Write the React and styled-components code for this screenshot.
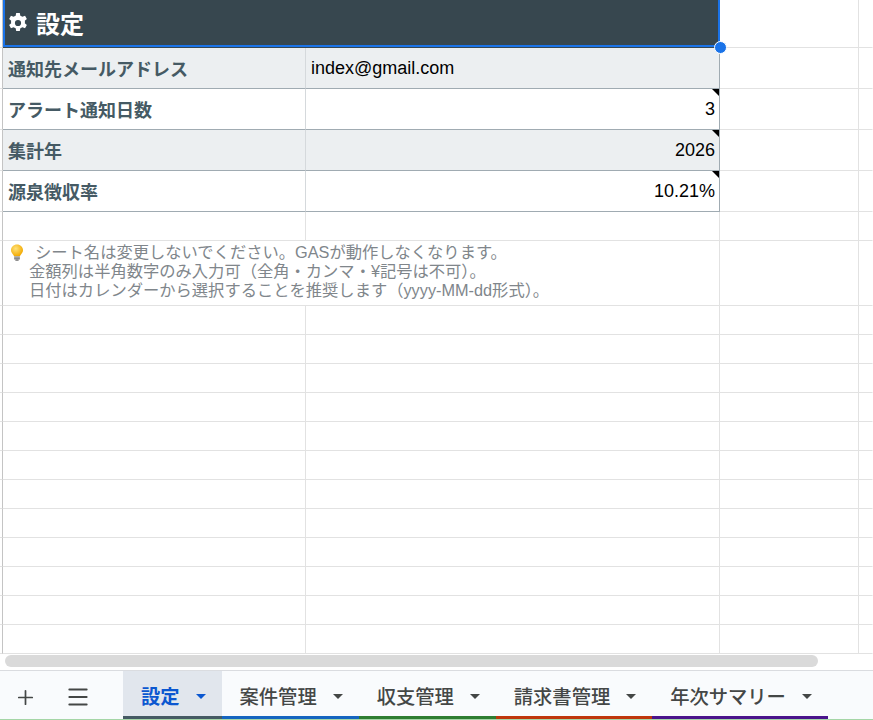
import React from 'react';
import styled, { createGlobalStyle } from 'styled-components';
import { Plus, Menu } from 'lucide-react';

const GlobalStyle = createGlobalStyle`
  html, body {
    margin: 0;
    padding: 0;
    background: #fff;
  }
  * {
    box-sizing: border-box;
  }
`;

const FONT = `"Liberation Sans", "Noto Sans CJK JP", Arial, sans-serif`;

const Page = styled.div`
  width: 873px;
  height: 720px;
  overflow: hidden;
  display: flex;
  flex-direction: column;
  font-family: ${FONT};
  background: #fff;
`;

// header, 4 table rows, spacer, note row, then the plain rows
const Grid = styled.div`
  display: grid;
  grid-template-columns: 3px 303px 414px 139px 1fr;
  grid-template-rows: 48px repeat(4, 41px) 29px 65px repeat(12, 29px);
`;

const Cell = styled.div`
  position: relative;
  display: flex;
  align-items: center;
  min-width: 0;
  background: ${(p) => p.$bg || '#fff'};
  border-bottom: 1px solid ${(p) => p.$line || '#e2e2e2'};
  border-right: 1px solid ${(p) => p.$vline || '#e2e2e2'};
  justify-content: ${(p) => (p.$right ? 'flex-end' : 'flex-start')};
`;

const Stub = styled(Cell)`
  border-right: 1px solid #c4c4c4;
`;

const HeaderCell = styled(Cell)`
  grid-column: 2 / 4;
  background: #37474f;
  border-bottom: 1px solid #37474f;
  border-right: none;
  box-shadow: inset 0 -2px 0 #1a73e8, inset 2px 0 0 #1a73e8, inset -2px 0 0 #1a73e8;
  padding: 0 0 2px 3px;
  gap: 6px;
  color: #fff;
  font-family: "Noto Sans CJK JP", sans-serif;
  font-weight: 700;
  font-size: 24px;
`;

const Handle = styled.span`
  position: absolute;
  right: -7px;
  bottom: -7px;
  width: 13px;
  height: 13px;
  border-radius: 50%;
  background: #1a73e8;
  border: 1px solid #fff;
  z-index: 2;
`;

const Label = styled(Cell)`
  padding-left: 5px;
  color: #455a64;
  font-family: "Noto Sans CJK JP", sans-serif;
  font-weight: 700;
  font-size: 18px;
`;

const Value = styled(Cell)`
  padding: 0 4px 0 5px;
  color: #000;
  font-size: 18px;

  ${(p) =>
    p.$flag &&
    `
    &::after {
      content: '';
      position: absolute;
      top: 0;
      right: 0;
      border-top: 7px solid #000;
      border-left: 7px solid transparent;
    }
  `}
`;

const NoteCell = styled(Cell)`
  grid-column: 2 / 4;
  align-items: flex-start;
  padding: 2px 0 0 7px;
`;

const NoteText = styled.div`
  display: flex;
  flex-direction: column;
  color: #80868b;
  font-size: 16.3px;
  line-height: 19px;
  white-space: nowrap;
`;

const NoteLine = styled.div`
  display: flex;
  align-items: center;
  padding-left: ${(p) => p.$indent || 0}px;
  gap: 11px;
`;

const ScrollArea = styled.div`
  height: 16px;
  padding: 1px 0 0 5px;
  background: #fff;
`;

const Thumb = styled.div`
  width: 813px;
  height: 12px;
  border-radius: 6px;
  background: #dadada;
`;

const TabBar = styled.div`
  flex: 1;
  display: flex;
  align-items: stretch;
  background: #f9fbfd;
  border-top: 1px solid #dadce0;
  border-bottom: 1px solid #a5d6a7;
`;

const Tools = styled.div`
  width: 123px;
  display: flex;
`;

const IconButton = styled.div`
  width: ${(p) => p.$w}px;
  display: flex;
  align-items: center;
  justify-content: center;
  color: #444746;
  padding-top: 4px;
`;

const Tab = styled.div`
  display: flex;
  align-items: center;
  gap: 16px;
  padding: 4px 16px 0 18px;
  font-family: "Noto Sans CJK JP", sans-serif;
  font-size: 19.3px;
  font-weight: ${(p) => (p.$active ? 700 : 500)};
  color: ${(p) => (p.$active ? '#0b57d0' : '#444746')};
  background: ${(p) => (p.$active ? '#e1e6ed' : 'transparent')};
  border-bottom: 3px solid ${(p) => p.$color};
  white-space: nowrap;
`;

const Caret = styled.span`
  width: 0;
  height: 0;
  border-left: 5px solid transparent;
  border-right: 5px solid transparent;
  border-top: 5px solid currentColor;
  margin-top: 1px;
`;

const Gear = () => (
  <svg width="24" height="24" viewBox="0 0 24 24" fill="#fff">
    <path
      fillRule="evenodd"
      d="M10.2 1.5h3.6l.55 2.7c.75.25 1.45.6 2.1 1.05l2.6-.9 1.8 3.1-2.05 1.8c.1.4.15.8.15 1.25s-.05.85-.15 1.25l2.05 1.8-1.8 3.1-2.6-.9c-.65.45-1.35.8-2.1 1.05l-.55 2.7h-3.6l-.55-2.7c-.75-.25-1.45-.6-2.1-1.05l-2.6.9-1.8-3.1 2.05-1.8c-.1-.4-.15-.8-.15-1.25s.05-.85.15-1.25L3.15 7.45l1.8-3.1 2.6.9c.65-.45 1.35-.8 2.1-1.05zM12 8.4a3.1 3.1 0 1 0 0 6.2 3.1 3.1 0 0 0 0-6.2z"
      transform="translate(0 0.5)"
    />
  </svg>
);

const Bulb = () => (
  <svg width="14" height="17" viewBox="0 0 14 17">
    <defs>
      <radialGradient id="bulbGlow" cx="40%" cy="35%" r="65%">
        <stop offset="0%" stopColor="#ffe27a" />
        <stop offset="100%" stopColor="#f2a900" />
      </radialGradient>
    </defs>
    <path d="M7 0.5C3.6 0.5 1 3 1 6.1c0 2.1 1.1 3.3 2 4.3.6.7 1 1.2 1 1.9h6c0-.7.4-1.2 1-1.9.9-1 2-2.2 2-4.3C13 3 10.4.5 7 .5z" fill="url(#bulbGlow)" />
    <rect x="4" y="12.3" width="6" height="1.6" rx="0.6" fill="#9e9e9e" />
    <rect x="4" y="14" width="6" height="1.5" rx="0.6" fill="#8a8a8a" />
    <rect x="5.2" y="15.4" width="3.6" height="1.3" rx="0.6" fill="#6d6d6d" />
  </svg>
);

const TABLE_LINE = '#a0abb2';
const TABLE_VLINE = '#d5d9dc';

const rows = [
  { label: '通知先メールアドレス', value: 'index@gmail.com', bg: '#eceff1' },
  { label: 'アラート通知日数', value: '3', right: true, flag: true },
  { label: '集計年', value: '2026', right: true, flag: true, bg: '#eceff1' },
  { label: '源泉徴収率', value: '10.21%', right: true, flag: true },
];

const tabs = [
  { name: '設定', color: '#455a64', active: true },
  { name: '案件管理', color: '#1565c0' },
  { name: '収支管理', color: '#2e7d32' },
  { name: '請求書管理', color: '#bf360c' },
  { name: '年次サマリー', color: '#4a148c' },
];

const EmptyRow = () => (
  <>
    <Stub />
    <Cell />
    <Cell />
    <Cell />
    <Cell $vline="transparent" />
  </>
);

export default function App() {
  return (
    <Page>
      <GlobalStyle />
      <Grid>
        <Stub />
        <HeaderCell>
          <Gear />
          設定
          <Handle />
        </HeaderCell>
        <Cell />
        <Cell $vline="transparent" />

        {rows.map((r) => (
          <React.Fragment key={r.label}>
            <Stub />
            <Label $bg={r.bg} $line={TABLE_LINE} $vline={TABLE_VLINE}>
              {r.label}
            </Label>
            <Value $bg={r.bg} $line={TABLE_LINE} $vline={TABLE_LINE} $right={r.right} $flag={r.flag}>
              {r.value}
            </Value>
            <Cell />
            <Cell $vline="transparent" />
          </React.Fragment>
        ))}

        <EmptyRow />

        <Stub />
        <NoteCell>
          <NoteText>
            <NoteLine>
              <Bulb />
              <span>シート名は変更しないでください。GASが動作しなくなります。</span>
            </NoteLine>
            <NoteLine $indent={19}>金額列は半角数字のみ入力可（全角・カンマ・¥記号は不可）。</NoteLine>
            <NoteLine $indent={19}>日付はカレンダーから選択することを推奨します（yyyy-MM-dd形式）。</NoteLine>
          </NoteText>
        </NoteCell>
        <Cell />
        <Cell $vline="transparent" />

        {Array.from({ length: 12 }).map((_, i) => (
          <EmptyRow key={i} />
        ))}
      </Grid>

      <ScrollArea>
        <Thumb />
      </ScrollArea>

      <TabBar>
        <Tools>
          <IconButton $w={50}>
            <Plus size={23} strokeWidth={1.8} />
          </IconButton>
          <IconButton $w={56}>
            <Menu size={26} strokeWidth={1.8} />
          </IconButton>
        </Tools>
        {tabs.map((t) => (
          <Tab key={t.name} $active={t.active} $color={t.color}>
            {t.name}
            <Caret />
          </Tab>
        ))}
      </TabBar>
    </Page>
  );
}
